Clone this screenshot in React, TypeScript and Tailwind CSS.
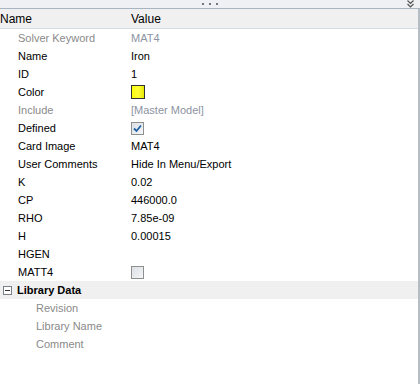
import React from "react";

type Row = {
  label: string;
  value?: React.ReactNode;
  dim?: boolean;
  dimValue?: boolean;
};

function Swatch() {
  return <div className="w-[14px] h-[14px] border border-[#333] bg-gradient-to-r from-[#ffff00] via-[#ffff33] to-[#e8e800]" />;
}

function Check({ checked }: { checked?: boolean }) {
  return (
    <div className="w-[13px] h-[13px] border border-[#8e8f8f] bg-gradient-to-br from-[#dcdfe4] to-[#f4f6f8] flex items-center justify-center">
      {checked && (
        <svg width="9" height="9" viewBox="0 0 9 9">
          <path d="M1 4.5 L3.5 7 L8 1.5" fill="none" stroke="#1f5fa8" strokeWidth="1.8" />
        </svg>
      )}
    </div>
  );
}

const rows: Row[] = [
  { label: "Solver Keyword", value: "MAT4", dim: true, dimValue: true },
  { label: "Name", value: "Iron" },
  { label: "ID", value: "1" },
  { label: "Color", value: <Swatch /> },
  { label: "Include", value: "[Master Model]", dim: true, dimValue: true },
  { label: "Defined", value: <Check checked /> },
  { label: "Card Image", value: "MAT4" },
  { label: "User Comments", value: "Hide In Menu/Export" },
  { label: "K", value: "0.02" },
  { label: "CP", value: "446000.0" },
  { label: "RHO", value: "7.85e-09" },
  { label: "H", value: "0.00015" },
  { label: "HGEN" },
  { label: "MATT4", value: <Check /> },
];

export default function App() {
  return (
    <div
      className="w-[420px] h-[384px] bg-white flex flex-col text-[11px] text-black overflow-hidden"
      style={{ fontFamily: '"Liberation Sans", Arial, sans-serif' }}
    >
      {/* splitter bar */}
      <div className="h-[9px] bg-[#eef0f3] border-b border-[#a9b4c2] flex items-center justify-center relative shrink-0">
        <div className="flex gap-[5px]">
          <div className="w-[2px] h-[2px] bg-[#707780]" />
          <div className="w-[2px] h-[2px] bg-[#707780]" />
          <div className="w-[2px] h-[2px] bg-[#707780]" />
        </div>
        <svg className="absolute right-[6px] top-0" width="7" height="8" viewBox="0 0 7 8">
          <path d="M0.5 0.5 L3.5 3.5 L6.5 0.5 M0.5 4 L3.5 7 L6.5 4" fill="none" stroke="#555" strokeWidth="1.2" />
        </svg>
      </div>

      <div className="flex-1 flex flex-col border-r-2 border-[#b4bcc6]">
        {/* header */}
        <div className="h-[20px] bg-[#f0f0f0] border-b border-[#d5dbe2] flex items-center shrink-0 text-[12px]">
          <div className="w-[131px]">Name</div>
          <div>Value</div>
        </div>

        {rows.map((r) => (
          <div key={r.label} className="h-[18px] flex items-center">
            <div className={`w-[131px] pl-[18px] ${r.dim ? "text-[#8a8a8a]" : ""}`}>{r.label}</div>
            <div className={`${r.dimValue ? "text-[#8d93a3]" : ""}`}>{r.value}</div>
          </div>
        ))}

        <div className="h-[18px] bg-[#f0f0f0] flex items-center">
          <div className="ml-[3px] w-[9px] h-[9px] border border-[#7a8088] bg-white flex items-center justify-center">
            <div className="w-[5px] h-[1px] bg-[#333]" />
          </div>
          <div className="ml-[5px] font-bold">Library Data</div>
        </div>
        {["Revision", "Library Name", "Comment"].map((l) => (
          <div key={l} className="h-[18px] flex items-center pl-[36px] text-[#8a8a8a]">
            {l}
          </div>
        ))}
      </div>
    </div>
  );
}
